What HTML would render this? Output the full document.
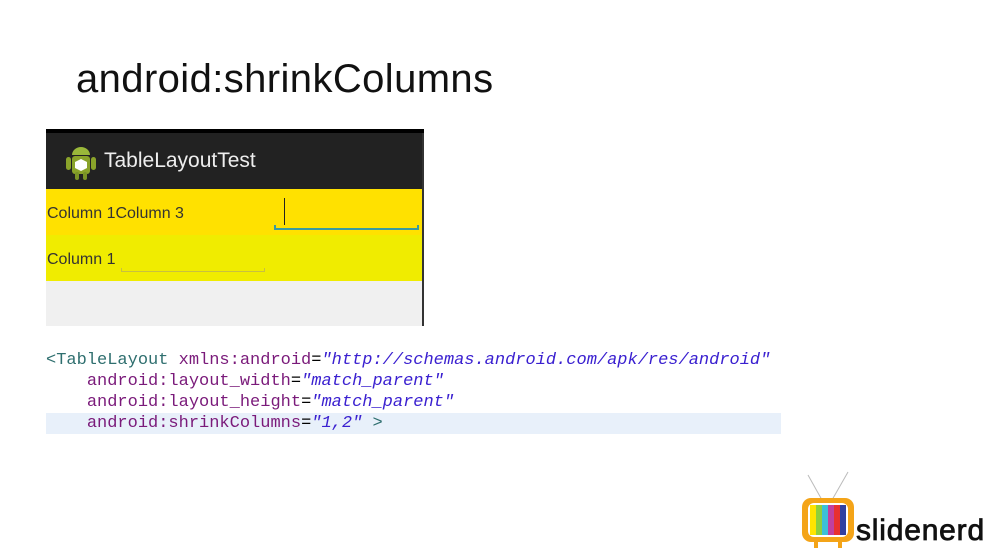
<!DOCTYPE html>
<html><head><style>
body{margin:0;width:999px;height:555px;background:#fff;position:relative;overflow:hidden;font-family:"Liberation Sans",sans-serif}
.a{position:absolute}
.code{font-family:"Liberation Mono",monospace;font-size:17px;white-space:pre;line-height:21px}
.t{color:#2f6f6f}.n{color:#7a1a7a}.v{color:#3a20d0;font-style:italic}
</style></head><body>
<div class="a" style="left:76px;top:57px;font-size:40px;color:#111;letter-spacing:0.4px">android:shrinkColumns</div>

<div class="a" style="left:46px;top:129px;width:378px;height:197px;background:#f0f0f0;border-right:2px solid #333;box-sizing:border-box"></div>
<div class="a" style="left:46px;top:129px;width:378px;height:4px;background:#000"></div>
<div class="a" style="left:46px;top:133px;width:376px;height:56px;background:#222"></div>
<svg class="a" style="left:64px;top:142px" width="34" height="40" viewBox="0 0 34 40">
<rect x="8" y="14" width="18" height="18" rx="3" fill="#8aa32a"/>
<path d="M8 13a9 8 0 0 1 18 0z" fill="#9ab83a"/>
<rect x="2" y="15" width="5" height="13" rx="2.5" fill="#8aa32a"/>
<rect x="27" y="15" width="5" height="13" rx="2.5" fill="#8aa32a"/>
<rect x="11" y="30" width="4" height="8" rx="2" fill="#7a9326"/>
<rect x="19" y="30" width="4" height="8" rx="2" fill="#7a9326"/>
<path d="M17 17l6 3v6l-6 3-6-3v-6z" fill="#fff"/>
</svg>
<div class="a" style="left:104px;top:149px;font-size:21px;color:#eee">TableLayoutTest</div>
<div class="a" style="left:46px;top:189px;width:376px;height:46px;background:#ffe100"></div>
<div class="a" style="left:46px;top:235px;width:376px;height:46px;background:#f0ec00"></div>
<div class="a" style="left:47px;top:205px;font-size:16px;color:#333">Column 1Column 3</div>
<div class="a" style="left:47px;top:251px;font-size:16px;color:#333">Column 1</div>
<div class="a" style="left:284px;top:198px;width:1px;height:27px;background:#222"></div>
<div class="a" style="left:274px;top:225px;width:145px;height:5px;border:solid #3a9aa0;border-width:0 2px 2px 2px;box-sizing:border-box"></div>
<div class="a" style="left:121px;top:268px;width:144px;height:4px;border:solid #c8c040;border-width:0 1px 1px 1px;box-sizing:border-box"></div>

<div class="a" style="left:46px;top:413px;width:735px;height:21px;background:#e8f0fa"></div>
<div class="a code" style="left:46px;top:350px"><span class="t">&lt;TableLayout</span> <span class="n">xmlns:android</span>=<span class="v">"http://schemas.android.com/apk/res/android"</span>
    <span class="n">android:layout_width</span>=<span class="v">"match_parent"</span>
    <span class="n">android:layout_height</span>=<span class="v">"match_parent"</span>
    <span class="n">android:shrinkColumns</span>=<span class="v">"1,2"</span> <span class="t">&gt;</span></div>

<svg class="a" style="left:800px;top:470px" width="60" height="82" viewBox="0 0 60 82">
<line x1="8" y1="5" x2="22" y2="30" stroke="#bbb" stroke-width="1"/>
<line x1="48" y1="2" x2="32" y2="30" stroke="#bbb" stroke-width="1"/>
<rect x="2" y="28" width="52" height="44" rx="9" fill="#f4a418"/>
<rect x="8" y="33" width="40" height="34" rx="6" fill="#fff"/>
<rect x="10" y="35" width="6" height="30" fill="#ffe400"/>
<rect x="16" y="35" width="6" height="30" fill="#8ecf3c"/>
<rect x="22" y="35" width="6" height="30" fill="#3cc0d8"/>
<rect x="28" y="35" width="6" height="30" fill="#c040a0"/>
<rect x="34" y="35" width="6" height="30" fill="#e83030"/>
<rect x="40" y="35" width="6" height="30" fill="#3040a0"/>
<rect x="14" y="72" width="4" height="6" fill="#f4a418"/><rect x="38" y="72" width="4" height="6" fill="#f4a418"/>
</svg>
<div class="a" style="left:856px;top:516px;font-size:30px;color:#111;letter-spacing:0.8px;line-height:30px;-webkit-text-stroke:0.8px #111">slidenerd</div>
</body></html>
